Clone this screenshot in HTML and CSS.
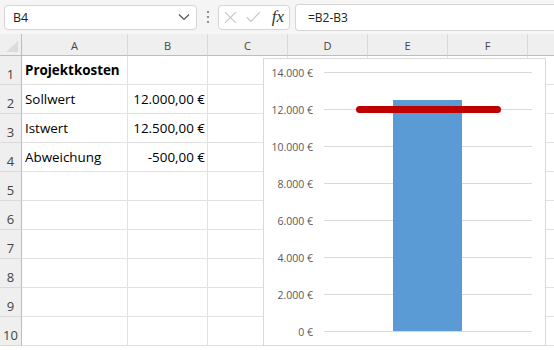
FILE: index.html
```html
<!DOCTYPE html>
<html lang="de">
<head>
  <meta charset="UTF-8" />
  <meta name="viewport" content="width=device-width, initial-scale=1" />
  <title>Projektkosten - Soll/Ist</title>
  <link rel="stylesheet" href="styles.css">
</head>
<body>
  <div class="formula-bar">
    <div class="name-box">
      <span>B4</span>
      <svg class="chevron" width="12" height="8" viewBox="0 0 12 8"><path d="M1 1.5 L6 6.5 L11 1.5" fill="none" stroke="#555" stroke-width="1.2"/></svg>
    </div>
    <svg class="dots" width="4" height="14" viewBox="0 0 4 14"><circle cx="2" cy="2" r="1.1" fill="#777"/><circle cx="2" cy="7" r="1.1" fill="#777"/><circle cx="2" cy="12" r="1.1" fill="#777"/></svg>
    <div class="fx-box">
      <svg width="13" height="13" viewBox="0 0 13 13"><path d="M1 1 L12 12 M12 1 L1 12" stroke="#c6c6c6" stroke-width="1.2"/></svg>
      <svg width="15" height="12" viewBox="0 0 15 12"><path d="M1 6.5 L5 10.5 L14 1" fill="none" stroke="#c6c6c6" stroke-width="1.2"/></svg>
      <span class="fx">fx</span>
    </div>
    <div class="formula-input">=B2-B3</div>
  </div>

  <div class="sheet">
    <div class="corner"><span class="corner-tri"></span></div>
    <div class="col-head">A</div>
    <div class="col-head">B</div>
    <div class="col-head">C</div>
    <div class="col-head">D</div>
    <div class="col-head">E</div>
    <div class="col-head">F</div>
    <div class="col-head"></div>

    <div class="row-head">1</div><div class="cell bold">Projektkosten</div><div class="cell"></div><div class="cell"></div><div class="cell"></div><div class="cell"></div><div class="cell"></div><div class="cell"></div>
    <div class="row-head">2</div><div class="cell">Sollwert</div><div class="cell num">12.000,00 €</div><div class="cell"></div><div class="cell"></div><div class="cell"></div><div class="cell"></div><div class="cell"></div>
    <div class="row-head">3</div><div class="cell">Istwert</div><div class="cell num">12.500,00 €</div><div class="cell"></div><div class="cell"></div><div class="cell"></div><div class="cell"></div><div class="cell"></div>
    <div class="row-head">4</div><div class="cell">Abweichung</div><div class="cell num">-500,00 €</div><div class="cell"></div><div class="cell"></div><div class="cell"></div><div class="cell"></div><div class="cell"></div>
    <div class="row-head">5</div><div class="cell"></div><div class="cell"></div><div class="cell"></div><div class="cell"></div><div class="cell"></div><div class="cell"></div><div class="cell"></div>
    <div class="row-head">6</div><div class="cell"></div><div class="cell"></div><div class="cell"></div><div class="cell"></div><div class="cell"></div><div class="cell"></div><div class="cell"></div>
    <div class="row-head">7</div><div class="cell"></div><div class="cell"></div><div class="cell"></div><div class="cell"></div><div class="cell"></div><div class="cell"></div><div class="cell"></div>
    <div class="row-head">8</div><div class="cell"></div><div class="cell"></div><div class="cell"></div><div class="cell"></div><div class="cell"></div><div class="cell"></div><div class="cell"></div>
    <div class="row-head">9</div><div class="cell"></div><div class="cell"></div><div class="cell"></div><div class="cell"></div><div class="cell"></div><div class="cell"></div><div class="cell"></div>
    <div class="row-head">10</div><div class="cell"></div><div class="cell"></div><div class="cell"></div><div class="cell"></div><div class="cell"></div><div class="cell"></div><div class="cell"></div>
  </div>

  <!-- Diagramm liegt frei über den Zellen -->
  <div class="chart">
    <svg width="281" height="286" viewBox="0 0 281 286">
      <g stroke="#d9d9d9" stroke-width="1">
        <line x1="60" y1="13.5" x2="268" y2="13.5"/>
        <line x1="60" y1="50.5" x2="268" y2="50.5"/>
        <line x1="60" y1="87.5" x2="268" y2="87.5"/>
        <line x1="60" y1="124.5" x2="268" y2="124.5"/>
        <line x1="60" y1="161.5" x2="268" y2="161.5"/>
        <line x1="60" y1="198.5" x2="268" y2="198.5"/>
        <line x1="60" y1="235.5" x2="268" y2="235.5"/>
        <line x1="60" y1="272.5" x2="268" y2="272.5"/>
      </g>
      <g class="axis" text-anchor="end">
        <text x="49" y="17.5">14.000 €</text>
        <text x="49" y="54.5">12.000 €</text>
        <text x="49" y="91.5">10.000 €</text>
        <text x="49" y="128.5">8.000 €</text>
        <text x="49" y="165.5">6.000 €</text>
        <text x="49" y="202.5">4.000 €</text>
        <text x="49" y="239.5">2.000 €</text>
        <text x="49" y="276.5">0 €</text>
      </g>
      <rect x="129" y="41" width="69" height="231" fill="#5b9bd5"/>
      <line x1="95.5" y1="50.5" x2="233.5" y2="50.5" stroke="#c00000" stroke-width="7" stroke-linecap="round"/>
    </svg>
  </div>
</body>
</html>
```

FILE: styles.css
```css
body {
  margin: 0;
  font-family: 'Open Sans', 'Liberation Sans', sans-serif;
  background: #fff;
  color: #000;
  overflow: hidden;
}

.formula-bar {
  display: flex;
  align-items: center;
  height: 34px;
  padding: 0 0 0 4px;
  background: #f5f5f5;
  box-sizing: border-box;
}

.name-box {
  display: flex;
  align-items: center;
  justify-content: space-between;
  width: 193px;
  height: 25px;
  padding: 0 6px 0 8px;
  box-sizing: border-box;
  background: #fff;
  border: 1px solid #d6d6d6;
  border-radius: 4px;
  font-size: 12.5px;
  color: #222;
}

.dots {
  margin: 0 8px 0 9px;
}

.fx-box {
  display: flex;
  align-items: center;
  gap: 9px;
  width: 72px;
  height: 25px;
  padding: 0 5px 0 5px;
  box-sizing: border-box;
  background: #fff;
  border: 1px solid #d6d6d6;
  border-radius: 4px;
}

.fx-box .fx {
  font-family: 'Liberation Serif', 'DejaVu Serif', serif;
  font-style: italic;
  font-size: 17px;
  color: #333;
  margin-left: 2px;
}

.formula-input {
  flex: 1;
  display: flex;
  align-items: center;
  height: 25px;
  margin-left: 5px;
  padding-left: 12px;
  background: #fff;
  border: 1px solid #d6d6d6;
  border-right: none;
  border-radius: 4px 0 0 4px;
  font-size: 12px;
  color: #222;
}

.sheet {
  display: grid;
  grid-template-columns: 22px 106px 80px 80px 80px 80px 80px 27px;
  grid-template-rows: 22px repeat(10, 29px);
}

.corner,
.col-head,
.row-head {
  background: #efefef;
  color: #444;
  box-sizing: border-box;
}

.corner {
  position: relative;
  border-right: 1px solid #bcbcbc;
  border-bottom: 1px solid #bcbcbc;
}

.corner-tri {
  position: absolute;
  right: 3px;
  bottom: 3px;
  width: 0;
  height: 0;
  border-left: 12px solid transparent;
  border-bottom: 11px solid #dcdcdc;
}

.col-head {
  display: flex;
  align-items: flex-end;
  justify-content: center;
  padding-bottom: 2px;
  font-size: 11px;
  border-right: 1px solid #dadada;
  border-bottom: 1px solid #bcbcbc;
}

.row-head {
  display: flex;
  align-items: flex-end;
  justify-content: center;
  padding-bottom: 1px;
  font-size: 13px;
  border-right: 1px solid #bcbcbc;
  border-bottom: 1px solid #dadada;
}

.cell {
  display: flex;
  align-items: flex-end;
  padding: 0 2px 5px 3px;
  font-size: 13.4px;
  white-space: nowrap;
  box-sizing: border-box;
  border-right: 1px solid #e1e1e1;
  border-bottom: 1px solid #e1e1e1;
}

.cell.bold {
  font-weight: 700;
}

.cell.num {
  justify-content: flex-end;
}

.chart {
  position: absolute;
  left: 263px;
  top: 58px;
  width: 281px;
  height: 286px;
  background: #fff;
  border: 1px solid #d9d9d9;
}

.chart svg {
  display: block;
}

.axis text {
  font-family: 'Open Sans', 'Liberation Sans', sans-serif;
  font-size: 10.5px;
  fill: #595959;
}
```
